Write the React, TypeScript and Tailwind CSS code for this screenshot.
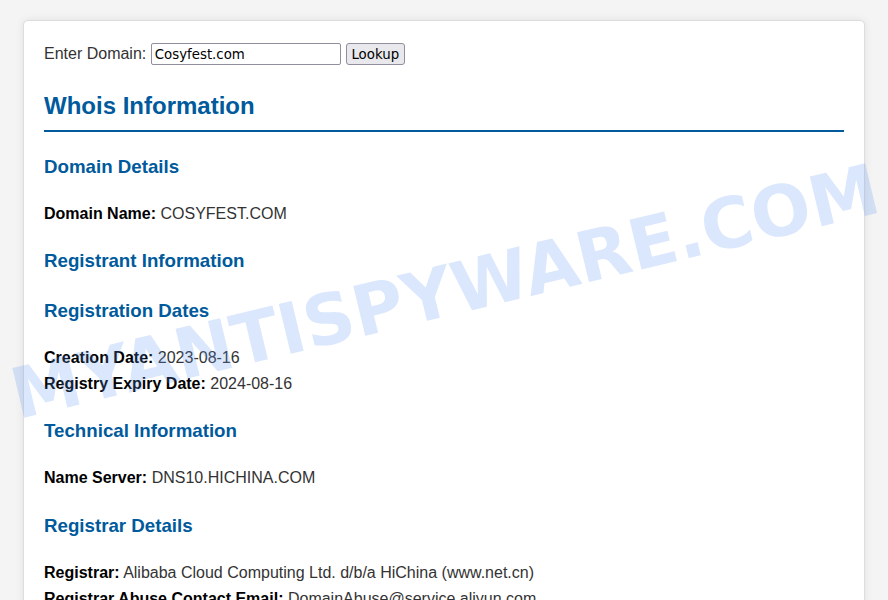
import React from "react";

function Field({ label, value }: { label: string; value: string }) {
  return (
    <div>
      <strong className="font-bold text-black">{label}:</strong> {value}
    </div>
  );
}

function Section({ title, children }: { title: string; children?: React.ReactNode }) {
  return (
    <>
      <h3 className="mb-[19px] mt-[20px] text-[18.72px] font-bold text-[#005a9c]">{title}</h3>
      {children && <div className="my-4">{children}</div>}
    </>
  );
}

export default function App() {
  return (
    <div className="relative min-h-screen overflow-hidden bg-[#f4f4f4] py-5 font-['Liberation_Sans',Arial,sans-serif] text-[16px] leading-[1.6] text-[#333]">
      <div className="mx-auto max-w-[842px] rounded-[5px] border border-[#ddd] bg-white p-5 shadow-[0_0_8px_rgba(0,0,0,0.08)]">
        <div className="flex h-[25.6px] items-center">
          <span>Enter Domain:</span>
          <input
            type="text"
            defaultValue="Cosyfest.com"
            className="ml-[4.5px] h-[22px] w-[190px] rounded-[2px] border border-[#8f8f9d] bg-white px-[3px] pt-[1px] font-['DejaVu_Sans',sans-serif] text-[13.33px] leading-normal text-black"
          />
          <button className="ml-[5px] h-[22px] w-[59px] rounded-[3px] border border-[#8f8f9d] bg-[#e9e9ed] pt-[1px] font-['DejaVu_Sans',sans-serif] text-[13.33px] leading-normal text-black">
            Lookup
          </button>
        </div>

        <h2 className="my-[19.92px] border-b-2 border-[#005a9c] pb-[5px] text-[24px] font-bold text-[#005a9c]">
          Whois Information
        </h2>

        <Section title="Domain Details">
          <Field label="Domain Name" value="COSYFEST.COM" />
        </Section>

        <Section title="Registrant Information" />

        <Section title="Registration Dates">
          <Field label="Creation Date" value="2023-08-16" />
          <Field label="Registry Expiry Date" value="2024-08-16" />
        </Section>

        <Section title="Technical Information">
          <Field label="Name Server" value="DNS10.HICHINA.COM" />
        </Section>

        <Section title="Registrar Details">
          <Field label="Registrar" value="Alibaba Cloud Computing Ltd. d/b/a HiChina (www.net.cn)" />
          <Field label="Registrar Abuse Contact Email" value="DomainAbuse@service.aliyun.com" />
          <Field label="Registrar Abuse Contact Phone" value="+86.95187" />
        </Section>
      </div>

      {/* watermark */}
      <div className="pointer-events-none absolute inset-0 overflow-hidden">
        <span className="absolute left-[445px] top-[292px] -translate-x-1/2 -translate-y-1/2 -rotate-[13.5deg] whitespace-nowrap font-['DejaVu_Sans',sans-serif] text-[70px] font-bold leading-none text-[rgba(96,150,240,0.23)]">
          MYANTISPYWARE.COM
        </span>
      </div>
    </div>
  );
}
